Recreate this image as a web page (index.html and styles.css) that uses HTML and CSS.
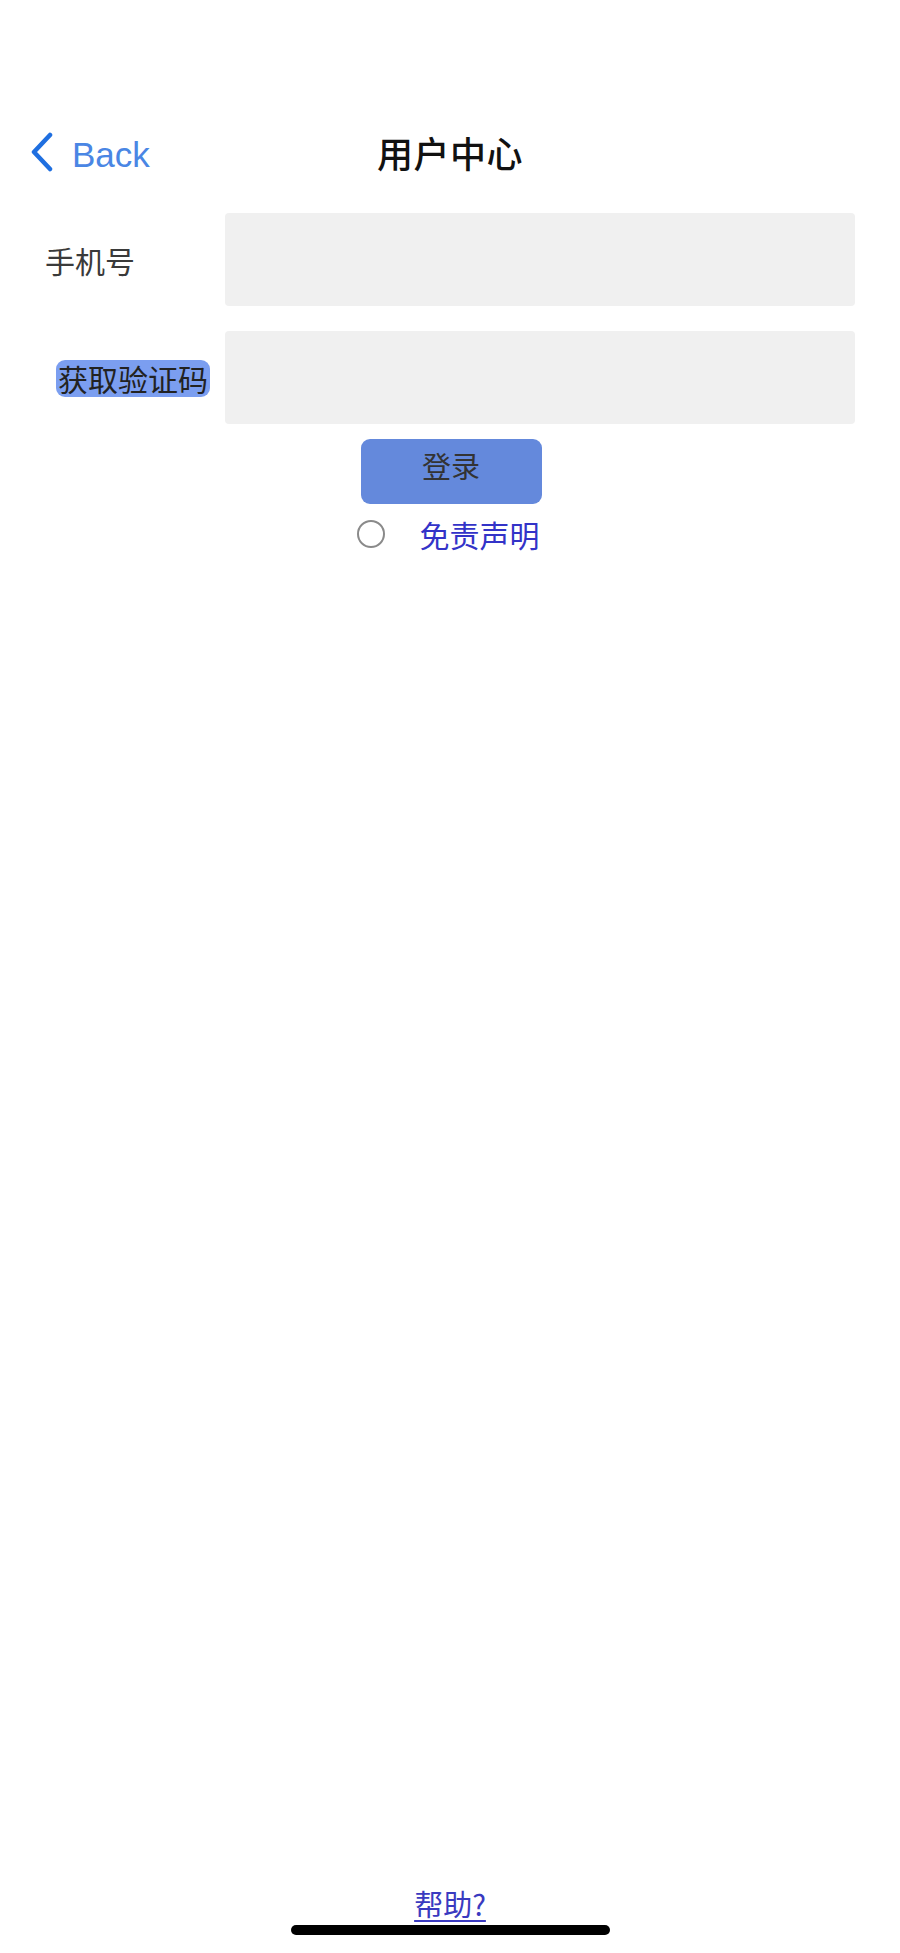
FILE: index.html
```html
<!DOCTYPE html>
<html>

<head>
  <meta charset="utf-8">
  <link rel="stylesheet" href="styles.css">
</head>

<body>
  <div class="page">
    <div class="navbar">
      <a class="back" href="#">
        <svg class="chevron" width="24" height="40" viewBox="0 0 24 40">
          <polyline points="20,3 4,20 20,37" fill="none" stroke="#1f6fe0" stroke-width="4.5" stroke-linecap="round" stroke-linejoin="round" />
        </svg>
        <span>Back</span>
      </a>
      <h1 class="title">用户中心</h1>
      <div></div>
    </div>

    <form class="login">
      <div class="row">
        <label for="phone" class="label">手机号</label>
        <input type="text" id="phone" name="phone" class="field" />
      </div>
      <div class="row">
        <div class="label"><span class="codebtn">获取验证码</span></div>
        <input type="text" id="code" name="code" class="field" />
      </div>

      <div class="actions">
        <button type="button" class="loginbtn">登录</button>
        <div class="agree">
          <input type="radio" id="agree" name="agree" class="radio" />
          <a href="#" class="link">免责声明</a>
        </div>
      </div>
    </form>

    <div class="footer">
      <a href="#" class="help">帮助?</a>
      <div class="homebar"></div>
    </div>
  </div>
</body>

</html>
```

FILE: styles.css
```css
* {
  box-sizing: border-box;
}

body {
  margin: 0;
  background: #fff;
  font-family: "Noto Sans CJK SC", "Liberation Sans", sans-serif;
}

.page {
  min-height: 1953px;
  display: flex;
  flex-direction: column;
}

.navbar {
  margin-top: 120px;
  height: 64px;
  display: grid;
  grid-template-columns: 1fr auto 1fr;
  align-items: center;
}

.back {
  display: flex;
  align-items: center;
  gap: 18px;
  padding-left: 30px;
  color: #4a86e4;
  text-decoration: none;
  font-family: "Liberation Sans", sans-serif;
  font-size: 35px;
}

.back span {
  padding-top: 6px;
}

.chevron {
  display: block;
}

.title {
  margin: 0;
  font-size: 36px;
  font-weight: 500;
  color: #111;
  letter-spacing: 0.5px;
}

.login {
  margin: 29px 45px 0 0;
}

.row {
  display: grid;
  grid-template-columns: 225px 1fr;
  align-items: center;
  margin-bottom: 25px;
}

.label {
  padding-left: 45px;
  font-size: 30px;
  color: #3a3a3a;
}

.codebtn {
  display: inline-block;
  margin-left: 11px;
  padding: 0 2px;
  line-height: 37px;
  background: #7b9ef0;
  color: #222;
  border-radius: 9px;
  font-size: 30px;
  white-space: nowrap;
}

.field {
  height: 93px;
  border: none;
  border-radius: 4px;
  background: #f0f0f0;
  outline: none;
}

.actions {
  margin-top: -10px;
  display: flex;
  flex-direction: column;
  align-items: center;
  padding-left: 47px;
}

.loginbtn {
  width: 181px;
  height: 65px;
  border: none;
  border-radius: 9px;
  background: #6489dc;
  color: #333;
  font-family: "Noto Sans CJK SC", sans-serif;
  font-size: 29px;
  padding-bottom: 14px;
}

.agree {
  margin-top: 15px;
  display: flex;
  align-items: center;
  gap: 35px;
  margin-left: -6px;
}

.radio {
  appearance: none;
  width: 28px;
  height: 28px;
  margin: 0;
  border: 2px solid #8a8a8a;
  border-radius: 50%;
}

.link {
  font-size: 30px;
  color: #3333c8;
  text-decoration: none;
  line-height: 30px;
}

.footer {
  margin-top: auto;
  display: flex;
  flex-direction: column;
  align-items: center;
  padding-bottom: 18px;
}

.help {
  font-size: 29px;
  color: #3a3ac0;
  line-height: 36px;
  text-underline-offset: 4px;
}

.homebar {
  margin-top: 4px;
  width: 319px;
  height: 10px;
  border-radius: 5px;
  background: #000;
}
```
